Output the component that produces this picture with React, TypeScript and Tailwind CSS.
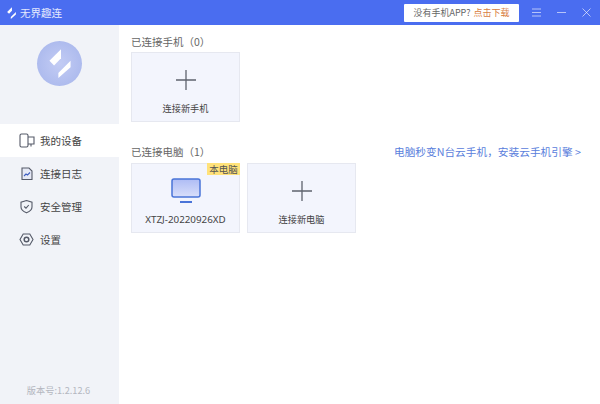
import React from 'react';

const FONT = '"Noto Sans CJK SC", "Noto Sans", sans-serif';

function Logo({ width, height }: { width: number; height: number }) {
  return (
    <svg width={width} height={height} viewBox="42 32 66 88" fill="#ffffff">
      <path d="M78 33 L43 68 L57 82 L78 60 Z" />
      <path d="M107 68 L70 105 L70 120 L107 87 Z" />
    </svg>
  );
}

function Plus() {
  return (
    <svg width="20" height="20" viewBox="0 0 20 20" className="text-[#5f636e]">
      <path d="M0 10 H20 M10 0 V20" stroke="currentColor" strokeWidth="1.3" />
    </svg>
  );
}

function AddCard({ label, className }: { label: string; className: string }) {
  return (
    <div className={`w-[109px] h-[70px] bg-[#f3f5fd] border border-[#e6e8f0] flex flex-col items-center ${className}`}>
      <div className="mt-[17px]"><Plus /></div>
      <span className="mt-[11px] text-[9.2px] leading-[14px] text-[#444]">{label}</span>
    </div>
  );
}

const navItems = [
  {
    label: '我的设备',
    active: true,
    icon: (
      <g>
        <rect x="2" y="2" width="8" height="13" rx="1.5" />
        <path d="M10 5 H16 V12 H10 M13 12 V14.5" />
      </g>
    ),
  },
  {
    label: '连接日志',
    active: false,
    icon: (
      <g>
        <path d="M4 3 H11 L14 6 V14.5 H4 Z" fill="#e6e9f5" />
        <path d="M6 11 L8 9 L9.5 10 L12 7.5" stroke="#3f5fc0" />
      </g>
    ),
  },
  {
    label: '安全管理',
    active: false,
    icon: (
      <g>
        <path d="M8.5 2.5 L14 4.2 V9 C14 12 11 13.8 8.5 14.8 C6 13.8 3 12 3 9 V4.2 Z" />
        <path d="M6.2 8.5 L8 10.2 L10.8 7" />
      </g>
    ),
  },
  {
    label: '设置',
    active: false,
    icon: (
      <g>
        <path d="M5.2 3 H11.8 L15 8.5 L11.8 14 H5.2 L2 8.5 Z" />
        <circle cx="8.5" cy="8.5" r="2.3" strokeWidth="1.5" />
      </g>
    ),
  },
];

export default function App() {
  return (
    <div className="w-[600px] h-[404px] bg-white flex flex-col overflow-hidden" style={{ fontFamily: FONT }}>
      {/* title bar */}
      <header className="h-[25px] bg-[#4a6df0] flex items-center shrink-0">
        <div className="ml-[7px] flex"><Logo width={9} height={12} /></div>
        <span className="ml-[4px] text-[10.5px] text-white/85">无界趣连</span>
        <div className="ml-auto w-[115px] h-[18px] bg-white rounded-[1px] flex items-center justify-center text-[9px] leading-none">
          <span className="text-[#666]">没有手机APP?</span>
          <span className="text-[#d9803f] ml-[3px]">点击下载</span>
        </div>
        <div className="ml-[13px] flex items-center gap-[16px] mr-[9px] text-white/60">
          <svg width="9" height="9" viewBox="0 0 9 9"><path d="M0 1 H9 M0 4.5 H9 M0 8 H9" stroke="currentColor" /></svg>
          <svg width="9" height="9" viewBox="0 0 9 9"><path d="M0 4.5 H9" stroke="currentColor" /></svg>
          <svg width="9" height="9" viewBox="0 0 9 9"><path d="M0.5 0.5 L8.5 8.5 M8.5 0.5 L0.5 8.5" stroke="currentColor" /></svg>
        </div>
      </header>

      <div className="flex-1 flex min-h-0">
        {/* sidebar */}
        <aside className="w-[119px] bg-[#f1f3f8] flex flex-col shrink-0">
          <div className="mt-[16px] self-center w-[45px] h-[45px] rounded-full bg-radial from-[#c3ccf4] to-[#a5b4eb] flex items-center justify-center">
            <Logo width={22} height={29} />
          </div>
          <nav className="mt-[38px] flex flex-col">
            {navItems.map((item) => (
              <div key={item.label} className={`h-[33px] flex items-center pl-[18px] ${item.active ? 'bg-white' : ''}`}>
                <svg width="17" height="17" viewBox="0 0 17 17" fill="none" stroke="#555a68" strokeWidth="1.1">{item.icon}</svg>
                <span className="ml-[5px] text-[10.5px] text-[#444]">{item.label}</span>
              </div>
            ))}
          </nav>
          <div className="mt-auto mb-[7px] pr-[2px] text-center text-[9.2px] leading-[14px] text-[#b4b7c0]">版本号:1.2.12.6</div>
        </aside>

        {/* main */}
        <main className="flex-1 pl-[12px] pt-[9px] pr-[19px]">
          <div className="text-[10.5px] leading-[15px] text-[#666]">已连接手机（0）</div>
          <AddCard label="连接新手机" className="mt-[3px]" />

          <div className="mt-[22px] flex items-center justify-between leading-[15px]">
            <span className="text-[10.5px] text-[#666]">已连接电脑（1）</span>
            <span className="text-[10.7px] text-[#5a80dc]">电脑秒变N台云手机，安装云手机引擎 &gt;</span>
          </div>
          <div className="mt-[4px] flex gap-[7px]">
            <div className="relative w-[109px] h-[70px] bg-[#f3f5fd] border border-[#e6e8f0] flex flex-col items-center">
              <span className="absolute -top-px -right-px w-[33px] h-[12px] bg-[#ffe27a] text-[9.5px] leading-[12px] text-center text-[#555]">本电脑</span>
              <svg width="30" height="26" viewBox="0 0 30 26" className="mt-[14px]">
                <defs>
                  <linearGradient id="screen" x1="0" y1="0" x2="0" y2="1">
                    <stop offset="0" stopColor="#aebcf5" />
                    <stop offset="1" stopColor="#d9dffa" />
                  </linearGradient>
                </defs>
                <rect x="1" y="1" width="28" height="18" rx="2" fill="url(#screen)" stroke="#4a74d8" strokeWidth="1.5" />
                <rect x="9" y="23" width="12" height="2" fill="#4a74d8" />
              </svg>
              <span className="mt-[9px] text-[9.8px] leading-[14px] text-[#444]" style={{ fontFamily: '"Noto Sans", sans-serif' }}>XTZJ-20220926XD</span>
            </div>
            <AddCard label="连接新电脑" className="" />
          </div>
        </main>
      </div>
    </div>
  );
}
